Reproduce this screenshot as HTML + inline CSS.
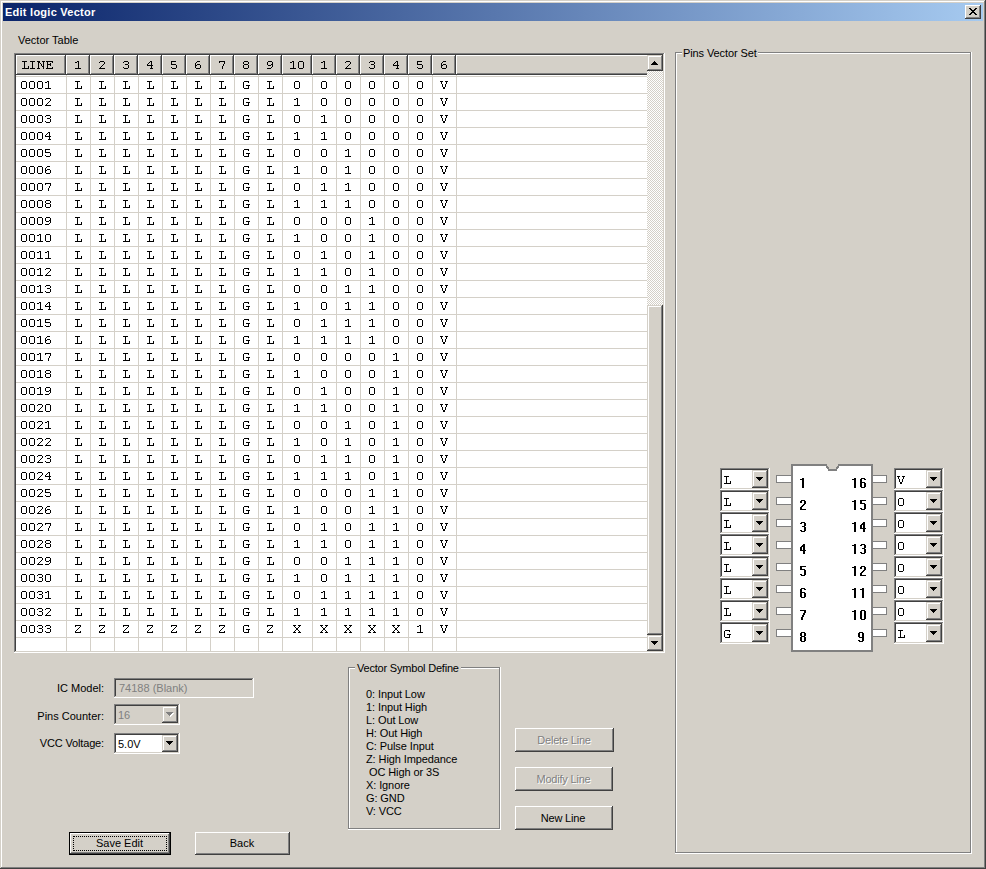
<!DOCTYPE html><html><head><meta charset="utf-8"><style>
*{margin:0;padding:0}
html,body{width:986px;height:869px;overflow:hidden;background:#D4D0C8}
#w{position:relative;width:986px;height:869px;overflow:hidden}
#w div{position:absolute;white-space:pre}
.t{font:11px/11px "Liberation Sans",sans-serif;color:#000}
.tb{font:bold 11px/11px "Liberation Sans",sans-serif;color:#fff;letter-spacing:0.25px}
.m{font:13px/13px "Liberation Mono",monospace;color:#000;letter-spacing:0.2px}
.nb{font:bold 14px/14px "Liberation Sans",sans-serif;color:#000}
</style></head><body><div id="w"><div style="left:0px;top:0px;width:986px;height:869px;background:#D4D0C8;"></div><div style="left:1px;top:1px;width:984px;height:1px;background:#fff;"></div><div style="left:1px;top:1px;width:1px;height:867px;background:#fff;"></div><div style="left:984px;top:1px;width:1px;height:867px;background:#808080;"></div><div style="left:1px;top:867px;width:984px;height:1px;background:#808080;"></div><div style="left:985px;top:0px;width:1px;height:869px;background:#404040;"></div><div style="left:0px;top:868px;width:986px;height:1px;background:#404040;"></div><div style="left:3px;top:3px;width:980px;height:18px;background:linear-gradient(to right,#0A246A,#A6CAF0);"></div><div class="tb" style="left:5px;top:7px;">Edit logic Vector</div><div style="left:965px;top:5px;width:16px;height:14px;background:#D4D0C8;box-shadow:inset -1px -1px 0 #404040,inset 1px 1px 0 #fff,inset -2px -2px 0 #808080,inset 2px 2px 0 #D4D0C8;"></div><div style="left:969px;top:8px;width:1px;height:1px;background:#000;"></div><div style="left:970px;top:8px;width:1px;height:1px;background:#000;"></div><div style="left:975px;top:8px;width:1px;height:1px;background:#000;"></div><div style="left:976px;top:8px;width:1px;height:1px;background:#000;"></div><div style="left:970px;top:9px;width:1px;height:1px;background:#000;"></div><div style="left:971px;top:9px;width:1px;height:1px;background:#000;"></div><div style="left:974px;top:9px;width:1px;height:1px;background:#000;"></div><div style="left:975px;top:9px;width:1px;height:1px;background:#000;"></div><div style="left:971px;top:10px;width:1px;height:1px;background:#000;"></div><div style="left:972px;top:10px;width:1px;height:1px;background:#000;"></div><div style="left:973px;top:10px;width:1px;height:1px;background:#000;"></div><div style="left:974px;top:10px;width:1px;height:1px;background:#000;"></div><div style="left:972px;top:11px;width:1px;height:1px;background:#000;"></div><div style="left:973px;top:11px;width:1px;height:1px;background:#000;"></div><div style="left:971px;top:12px;width:1px;height:1px;background:#000;"></div><div style="left:972px;top:12px;width:1px;height:1px;background:#000;"></div><div style="left:973px;top:12px;width:1px;height:1px;background:#000;"></div><div style="left:974px;top:12px;width:1px;height:1px;background:#000;"></div><div style="left:970px;top:13px;width:1px;height:1px;background:#000;"></div><div style="left:971px;top:13px;width:1px;height:1px;background:#000;"></div><div style="left:974px;top:13px;width:1px;height:1px;background:#000;"></div><div style="left:975px;top:13px;width:1px;height:1px;background:#000;"></div><div style="left:969px;top:14px;width:1px;height:1px;background:#000;"></div><div style="left:970px;top:14px;width:1px;height:1px;background:#000;"></div><div style="left:975px;top:14px;width:1px;height:1px;background:#000;"></div><div style="left:976px;top:14px;width:1px;height:1px;background:#000;"></div><div class="t" style="left:18px;top:35px;">Vector Table</div><div style="left:14px;top:53px;width:651px;height:600px;background:#fff;box-shadow:inset -1px -1px 0 #fff,inset 1px 1px 0 #808080,inset -2px -2px 0 #D4D0C8,inset 2px 2px 0 #404040;"></div><div style="left:16px;top:55px;width:50px;height:20px;background:#D4D0C8;box-shadow:inset -1px -1px 0 #404040,inset 1px 1px 0 #fff,inset -2px -2px 0 #808080"></div><div style="left:66px;top:55px;width:24px;height:20px;background:#D4D0C8;box-shadow:inset -1px -1px 0 #404040,inset 1px 1px 0 #fff,inset -2px -2px 0 #808080"></div><div style="left:90px;top:55px;width:24px;height:20px;background:#D4D0C8;box-shadow:inset -1px -1px 0 #404040,inset 1px 1px 0 #fff,inset -2px -2px 0 #808080"></div><div style="left:114px;top:55px;width:24px;height:20px;background:#D4D0C8;box-shadow:inset -1px -1px 0 #404040,inset 1px 1px 0 #fff,inset -2px -2px 0 #808080"></div><div style="left:138px;top:55px;width:24px;height:20px;background:#D4D0C8;box-shadow:inset -1px -1px 0 #404040,inset 1px 1px 0 #fff,inset -2px -2px 0 #808080"></div><div style="left:162px;top:55px;width:24px;height:20px;background:#D4D0C8;box-shadow:inset -1px -1px 0 #404040,inset 1px 1px 0 #fff,inset -2px -2px 0 #808080"></div><div style="left:186px;top:55px;width:24px;height:20px;background:#D4D0C8;box-shadow:inset -1px -1px 0 #404040,inset 1px 1px 0 #fff,inset -2px -2px 0 #808080"></div><div style="left:210px;top:55px;width:24px;height:20px;background:#D4D0C8;box-shadow:inset -1px -1px 0 #404040,inset 1px 1px 0 #fff,inset -2px -2px 0 #808080"></div><div style="left:234px;top:55px;width:24px;height:20px;background:#D4D0C8;box-shadow:inset -1px -1px 0 #404040,inset 1px 1px 0 #fff,inset -2px -2px 0 #808080"></div><div style="left:258px;top:55px;width:24px;height:20px;background:#D4D0C8;box-shadow:inset -1px -1px 0 #404040,inset 1px 1px 0 #fff,inset -2px -2px 0 #808080"></div><div style="left:282px;top:55px;width:30px;height:20px;background:#D4D0C8;box-shadow:inset -1px -1px 0 #404040,inset 1px 1px 0 #fff,inset -2px -2px 0 #808080"></div><div style="left:312px;top:55px;width:24px;height:20px;background:#D4D0C8;box-shadow:inset -1px -1px 0 #404040,inset 1px 1px 0 #fff,inset -2px -2px 0 #808080"></div><div style="left:336px;top:55px;width:24px;height:20px;background:#D4D0C8;box-shadow:inset -1px -1px 0 #404040,inset 1px 1px 0 #fff,inset -2px -2px 0 #808080"></div><div style="left:360px;top:55px;width:24px;height:20px;background:#D4D0C8;box-shadow:inset -1px -1px 0 #404040,inset 1px 1px 0 #fff,inset -2px -2px 0 #808080"></div><div style="left:384px;top:55px;width:24px;height:20px;background:#D4D0C8;box-shadow:inset -1px -1px 0 #404040,inset 1px 1px 0 #fff,inset -2px -2px 0 #808080"></div><div style="left:408px;top:55px;width:24px;height:20px;background:#D4D0C8;box-shadow:inset -1px -1px 0 #404040,inset 1px 1px 0 #fff,inset -2px -2px 0 #808080"></div><div style="left:432px;top:55px;width:24px;height:20px;background:#D4D0C8;box-shadow:inset -1px -1px 0 #404040,inset 1px 1px 0 #fff,inset -2px -2px 0 #808080"></div><div style="left:456px;top:55px;width:191px;height:20px;background:#D4D0C8;box-shadow:inset 0 -1px 0 #404040,inset 1px 1px 0 #fff,inset 0 -2px 0 #808080"></div><div style="left:16px;top:76px;width:631px;height:1px;background:#D4D0C8;"></div><div style="left:16px;top:93px;width:631px;height:1px;background:#D4D0C8;"></div><div style="left:16px;top:110px;width:631px;height:1px;background:#D4D0C8;"></div><div style="left:16px;top:127px;width:631px;height:1px;background:#D4D0C8;"></div><div style="left:16px;top:144px;width:631px;height:1px;background:#D4D0C8;"></div><div style="left:16px;top:161px;width:631px;height:1px;background:#D4D0C8;"></div><div style="left:16px;top:178px;width:631px;height:1px;background:#D4D0C8;"></div><div style="left:16px;top:195px;width:631px;height:1px;background:#D4D0C8;"></div><div style="left:16px;top:212px;width:631px;height:1px;background:#D4D0C8;"></div><div style="left:16px;top:229px;width:631px;height:1px;background:#D4D0C8;"></div><div style="left:16px;top:246px;width:631px;height:1px;background:#D4D0C8;"></div><div style="left:16px;top:263px;width:631px;height:1px;background:#D4D0C8;"></div><div style="left:16px;top:280px;width:631px;height:1px;background:#D4D0C8;"></div><div style="left:16px;top:297px;width:631px;height:1px;background:#D4D0C8;"></div><div style="left:16px;top:314px;width:631px;height:1px;background:#D4D0C8;"></div><div style="left:16px;top:331px;width:631px;height:1px;background:#D4D0C8;"></div><div style="left:16px;top:348px;width:631px;height:1px;background:#D4D0C8;"></div><div style="left:16px;top:365px;width:631px;height:1px;background:#D4D0C8;"></div><div style="left:16px;top:382px;width:631px;height:1px;background:#D4D0C8;"></div><div style="left:16px;top:399px;width:631px;height:1px;background:#D4D0C8;"></div><div style="left:16px;top:416px;width:631px;height:1px;background:#D4D0C8;"></div><div style="left:16px;top:433px;width:631px;height:1px;background:#D4D0C8;"></div><div style="left:16px;top:450px;width:631px;height:1px;background:#D4D0C8;"></div><div style="left:16px;top:467px;width:631px;height:1px;background:#D4D0C8;"></div><div style="left:16px;top:484px;width:631px;height:1px;background:#D4D0C8;"></div><div style="left:16px;top:501px;width:631px;height:1px;background:#D4D0C8;"></div><div style="left:16px;top:518px;width:631px;height:1px;background:#D4D0C8;"></div><div style="left:16px;top:535px;width:631px;height:1px;background:#D4D0C8;"></div><div style="left:16px;top:552px;width:631px;height:1px;background:#D4D0C8;"></div><div style="left:16px;top:569px;width:631px;height:1px;background:#D4D0C8;"></div><div style="left:16px;top:586px;width:631px;height:1px;background:#D4D0C8;"></div><div style="left:16px;top:603px;width:631px;height:1px;background:#D4D0C8;"></div><div style="left:16px;top:620px;width:631px;height:1px;background:#D4D0C8;"></div><div style="left:16px;top:637px;width:631px;height:1px;background:#D4D0C8;"></div><div style="left:66px;top:75px;width:1px;height:576px;background:#D4D0C8;"></div><div style="left:90px;top:75px;width:1px;height:576px;background:#D4D0C8;"></div><div style="left:114px;top:75px;width:1px;height:576px;background:#D4D0C8;"></div><div style="left:138px;top:75px;width:1px;height:576px;background:#D4D0C8;"></div><div style="left:162px;top:75px;width:1px;height:576px;background:#D4D0C8;"></div><div style="left:186px;top:75px;width:1px;height:576px;background:#D4D0C8;"></div><div style="left:210px;top:75px;width:1px;height:576px;background:#D4D0C8;"></div><div style="left:234px;top:75px;width:1px;height:576px;background:#D4D0C8;"></div><div style="left:258px;top:75px;width:1px;height:576px;background:#D4D0C8;"></div><div style="left:282px;top:75px;width:1px;height:576px;background:#D4D0C8;"></div><div style="left:312px;top:75px;width:1px;height:576px;background:#D4D0C8;"></div><div style="left:336px;top:75px;width:1px;height:576px;background:#D4D0C8;"></div><div style="left:360px;top:75px;width:1px;height:576px;background:#D4D0C8;"></div><div style="left:384px;top:75px;width:1px;height:576px;background:#D4D0C8;"></div><div style="left:408px;top:75px;width:1px;height:576px;background:#D4D0C8;"></div><div style="left:432px;top:75px;width:1px;height:576px;background:#D4D0C8;"></div><div style="left:456px;top:75px;width:1px;height:576px;background:#D4D0C8;"></div><div style="left:647px;top:71px;width:16px;height:234px;background:repeating-conic-gradient(#fff 0 25%,#D4D0C8 0 50%);background-size:2px 2px"></div><div style="left:647px;top:55px;width:16px;height:16px;background:#D4D0C8;box-shadow:inset -1px -1px 0 #404040,inset 1px 1px 0 #D4D0C8,inset -2px -2px 0 #808080,inset 2px 2px 0 #fff;"></div><div style="left:654px;top:61px;width:1px;height:1px;background:#000;"></div><div style="left:653px;top:62px;width:3px;height:1px;background:#000;"></div><div style="left:652px;top:63px;width:5px;height:1px;background:#000;"></div><div style="left:651px;top:64px;width:7px;height:1px;background:#000;"></div><div style="left:647px;top:305px;width:16px;height:330px;background:#D4D0C8;box-shadow:inset -1px -1px 0 #404040,inset 1px 1px 0 #D4D0C8,inset -2px -2px 0 #808080,inset 2px 2px 0 #fff;"></div><div style="left:647px;top:635px;width:16px;height:16px;background:#D4D0C8;box-shadow:inset -1px -1px 0 #404040,inset 1px 1px 0 #D4D0C8,inset -2px -2px 0 #808080,inset 2px 2px 0 #fff;"></div><div style="left:651px;top:641px;width:7px;height:1px;background:#000;"></div><div style="left:652px;top:642px;width:5px;height:1px;background:#000;"></div><div style="left:653px;top:643px;width:3px;height:1px;background:#000;"></div><div style="left:654px;top:644px;width:1px;height:1px;background:#000;"></div><div class="t" style="left:4px;top:683px;width:100px;text-align:right;">IC Model:</div><div style="left:114px;top:678px;width:140px;height:20px;background:#D4D0C8;box-shadow:inset -1px -1px 0 #fff,inset 1px 1px 0 #808080,inset -2px -2px 0 #D4D0C8,inset 2px 2px 0 #404040;"></div><div class="t" style="left:119px;top:683px;color:#808080">74188 (Blank)</div><div class="t" style="left:4px;top:711px;width:100px;text-align:right;">Pins Counter:</div><div style="left:114px;top:704px;width:66px;height:21px;background:#D4D0C8;box-shadow:inset -1px -1px 0 #fff,inset 1px 1px 0 #808080,inset -2px -2px 0 #D4D0C8,inset 2px 2px 0 #404040;"></div><div class="t" style="left:118px;top:710px;color:#808080">16</div><div style="left:162px;top:706px;width:16px;height:17px;background:#D4D0C8;box-shadow:inset -1px -1px 0 #404040,inset 1px 1px 0 #D4D0C8,inset -2px -2px 0 #808080,inset 2px 2px 0 #fff;"></div><div style="left:167px;top:713px;width:7px;height:1px;background:#fff;"></div><div style="left:168px;top:714px;width:5px;height:1px;background:#fff;"></div><div style="left:169px;top:715px;width:3px;height:1px;background:#fff;"></div><div style="left:170px;top:716px;width:1px;height:1px;background:#fff;"></div><div style="left:166px;top:712px;width:7px;height:1px;background:#808080;"></div><div style="left:167px;top:713px;width:5px;height:1px;background:#808080;"></div><div style="left:168px;top:714px;width:3px;height:1px;background:#808080;"></div><div style="left:169px;top:715px;width:1px;height:1px;background:#808080;"></div><div class="t" style="left:4px;top:738px;width:100px;text-align:right;letter-spacing:-0.15px">VCC Voltage:</div><div style="left:114px;top:733px;width:66px;height:21px;background:#fff;box-shadow:inset -1px -1px 0 #fff,inset 1px 1px 0 #808080,inset -2px -2px 0 #D4D0C8,inset 2px 2px 0 #404040;"></div><div class="t" style="left:118px;top:739px;">5.0V</div><div style="left:162px;top:735px;width:16px;height:17px;background:#D4D0C8;box-shadow:inset -1px -1px 0 #404040,inset 1px 1px 0 #D4D0C8,inset -2px -2px 0 #808080,inset 2px 2px 0 #fff;"></div><div style="left:166px;top:741px;width:7px;height:1px;background:#000;"></div><div style="left:167px;top:742px;width:5px;height:1px;background:#000;"></div><div style="left:168px;top:743px;width:3px;height:1px;background:#000;"></div><div style="left:169px;top:744px;width:1px;height:1px;background:#000;"></div><div style="left:69px;top:832px;width:102px;height:23px;background:#000;"></div><div style="left:70px;top:833px;width:100px;height:21px;background:#D4D0C8;box-shadow:inset -1px -1px 0 #404040,inset 1px 1px 0 #fff,inset -2px -2px 0 #808080,inset 2px 2px 0 #D4D0C8;"></div><div style="left:73px;top:836px;width:94px;height:15px;box-sizing:border-box;border:1px dotted #000"></div><div class="t" style="left:69.5px;top:838px;width:100px;text-align:center;">Save Edit</div><div style="left:195px;top:832px;width:95px;height:23px;background:#D4D0C8;box-shadow:inset -1px -1px 0 #404040,inset 1px 1px 0 #fff,inset -2px -2px 0 #808080,inset 2px 2px 0 #D4D0C8;"></div><div class="t" style="left:192.0px;top:838px;width:100px;text-align:center;">Back</div><div style="left:348px;top:667px;width:152px;height:1px;background:#808080;"></div><div style="left:349px;top:668px;width:151px;height:1px;background:#fff;"></div><div style="left:348px;top:667px;width:1px;height:162px;background:#808080;"></div><div style="left:349px;top:668px;width:1px;height:161px;background:#fff;"></div><div style="left:499px;top:667px;width:1px;height:162px;background:#808080;"></div><div style="left:500px;top:667px;width:1px;height:163px;background:#fff;"></div><div style="left:348px;top:828px;width:152px;height:1px;background:#808080;"></div><div style="left:348px;top:829px;width:153px;height:1px;background:#fff;"></div><div style="left:355px;top:666px;width:106px;height:4px;background:#D4D0C8;"></div><div class="t" style="left:357px;top:663px;letter-spacing:-0.2px">Vector Symbol Define</div><div class="t" style="left:366px;top:689px;letter-spacing:-0.1px">0: Input Low</div><div class="t" style="left:366px;top:702px;letter-spacing:-0.1px">1: Input High</div><div class="t" style="left:366px;top:715px;letter-spacing:-0.1px">L: Out Low</div><div class="t" style="left:366px;top:728px;letter-spacing:-0.1px">H: Out High</div><div class="t" style="left:366px;top:741px;letter-spacing:-0.1px">C: Pulse Input</div><div class="t" style="left:366px;top:754px;letter-spacing:-0.1px">Z: High Impedance</div><div class="t" style="left:366px;top:767px;letter-spacing:-0.1px">&nbsp;OC High or 3S</div><div class="t" style="left:366px;top:780px;letter-spacing:-0.1px">X: Ignore</div><div class="t" style="left:366px;top:793px;letter-spacing:-0.1px">G: GND</div><div class="t" style="left:366px;top:806px;letter-spacing:-0.1px">V: VCC</div><div style="left:515px;top:728px;width:99px;height:24px;background:#D4D0C8;box-shadow:inset -1px -1px 0 #404040,inset 1px 1px 0 #fff,inset -2px -2px 0 #808080,inset 2px 2px 0 #D4D0C8;"></div><div class="t" style="left:505.0px;top:736px;width:120px;text-align:center;color:#fff;letter-spacing:-0.2px">Delete Line</div><div class="t" style="left:504.0px;top:735px;width:120px;text-align:center;color:#808080;letter-spacing:-0.2px">Delete Line</div><div style="left:515px;top:767px;width:98px;height:24px;background:#D4D0C8;box-shadow:inset -1px -1px 0 #404040,inset 1px 1px 0 #fff,inset -2px -2px 0 #808080,inset 2px 2px 0 #D4D0C8;"></div><div class="t" style="left:504.5px;top:775px;width:120px;text-align:center;color:#fff;letter-spacing:-0.2px">Modify Line</div><div class="t" style="left:503.5px;top:774px;width:120px;text-align:center;color:#808080;letter-spacing:-0.2px">Modify Line</div><div style="left:515px;top:806px;width:98px;height:24px;background:#D4D0C8;box-shadow:inset -1px -1px 0 #404040,inset 1px 1px 0 #fff,inset -2px -2px 0 #808080,inset 2px 2px 0 #D4D0C8;"></div><div class="t" style="left:503.0px;top:813px;width:120px;text-align:center;letter-spacing:-0.2px">New Line</div><div style="left:675px;top:52px;width:296px;height:1px;background:#808080;"></div><div style="left:676px;top:53px;width:295px;height:1px;background:#fff;"></div><div style="left:675px;top:52px;width:1px;height:801px;background:#808080;"></div><div style="left:676px;top:53px;width:1px;height:800px;background:#fff;"></div><div style="left:970px;top:52px;width:1px;height:801px;background:#808080;"></div><div style="left:971px;top:52px;width:1px;height:802px;background:#fff;"></div><div style="left:675px;top:852px;width:296px;height:1px;background:#808080;"></div><div style="left:675px;top:853px;width:297px;height:1px;background:#fff;"></div><div style="left:682px;top:51px;width:76px;height:4px;background:#D4D0C8;"></div><div class="t" style="left:683px;top:48px;letter-spacing:-0.1px">Pins Vector Set</div><div style="left:720px;top:468px;width:50px;height:22px;background:#fff;box-shadow:inset -1px -1px 0 #fff,inset 1px 1px 0 #808080,inset -2px -2px 0 #D4D0C8,inset 2px 2px 0 #404040;"></div><div style="left:752px;top:470px;width:16px;height:18px;background:#D4D0C8;box-shadow:inset -1px -1px 0 #404040,inset 1px 1px 0 #D4D0C8,inset -2px -2px 0 #808080,inset 2px 2px 0 #fff;"></div><div style="left:756px;top:477px;width:7px;height:1px;background:#000;"></div><div style="left:757px;top:478px;width:5px;height:1px;background:#000;"></div><div style="left:758px;top:479px;width:3px;height:1px;background:#000;"></div><div style="left:759px;top:480px;width:1px;height:1px;background:#000;"></div><div style="left:894px;top:468px;width:50px;height:22px;background:#fff;box-shadow:inset -1px -1px 0 #fff,inset 1px 1px 0 #808080,inset -2px -2px 0 #D4D0C8,inset 2px 2px 0 #404040;"></div><div style="left:926px;top:470px;width:16px;height:18px;background:#D4D0C8;box-shadow:inset -1px -1px 0 #404040,inset 1px 1px 0 #D4D0C8,inset -2px -2px 0 #808080,inset 2px 2px 0 #fff;"></div><div style="left:930px;top:477px;width:7px;height:1px;background:#000;"></div><div style="left:931px;top:478px;width:5px;height:1px;background:#000;"></div><div style="left:932px;top:479px;width:3px;height:1px;background:#000;"></div><div style="left:933px;top:480px;width:1px;height:1px;background:#000;"></div><div style="left:720px;top:490px;width:50px;height:22px;background:#fff;box-shadow:inset -1px -1px 0 #fff,inset 1px 1px 0 #808080,inset -2px -2px 0 #D4D0C8,inset 2px 2px 0 #404040;"></div><div style="left:752px;top:492px;width:16px;height:18px;background:#D4D0C8;box-shadow:inset -1px -1px 0 #404040,inset 1px 1px 0 #D4D0C8,inset -2px -2px 0 #808080,inset 2px 2px 0 #fff;"></div><div style="left:756px;top:499px;width:7px;height:1px;background:#000;"></div><div style="left:757px;top:500px;width:5px;height:1px;background:#000;"></div><div style="left:758px;top:501px;width:3px;height:1px;background:#000;"></div><div style="left:759px;top:502px;width:1px;height:1px;background:#000;"></div><div style="left:894px;top:490px;width:50px;height:22px;background:#fff;box-shadow:inset -1px -1px 0 #fff,inset 1px 1px 0 #808080,inset -2px -2px 0 #D4D0C8,inset 2px 2px 0 #404040;"></div><div style="left:926px;top:492px;width:16px;height:18px;background:#D4D0C8;box-shadow:inset -1px -1px 0 #404040,inset 1px 1px 0 #D4D0C8,inset -2px -2px 0 #808080,inset 2px 2px 0 #fff;"></div><div style="left:930px;top:499px;width:7px;height:1px;background:#000;"></div><div style="left:931px;top:500px;width:5px;height:1px;background:#000;"></div><div style="left:932px;top:501px;width:3px;height:1px;background:#000;"></div><div style="left:933px;top:502px;width:1px;height:1px;background:#000;"></div><div style="left:720px;top:512px;width:50px;height:22px;background:#fff;box-shadow:inset -1px -1px 0 #fff,inset 1px 1px 0 #808080,inset -2px -2px 0 #D4D0C8,inset 2px 2px 0 #404040;"></div><div style="left:752px;top:514px;width:16px;height:18px;background:#D4D0C8;box-shadow:inset -1px -1px 0 #404040,inset 1px 1px 0 #D4D0C8,inset -2px -2px 0 #808080,inset 2px 2px 0 #fff;"></div><div style="left:756px;top:521px;width:7px;height:1px;background:#000;"></div><div style="left:757px;top:522px;width:5px;height:1px;background:#000;"></div><div style="left:758px;top:523px;width:3px;height:1px;background:#000;"></div><div style="left:759px;top:524px;width:1px;height:1px;background:#000;"></div><div style="left:894px;top:512px;width:50px;height:22px;background:#fff;box-shadow:inset -1px -1px 0 #fff,inset 1px 1px 0 #808080,inset -2px -2px 0 #D4D0C8,inset 2px 2px 0 #404040;"></div><div style="left:926px;top:514px;width:16px;height:18px;background:#D4D0C8;box-shadow:inset -1px -1px 0 #404040,inset 1px 1px 0 #D4D0C8,inset -2px -2px 0 #808080,inset 2px 2px 0 #fff;"></div><div style="left:930px;top:521px;width:7px;height:1px;background:#000;"></div><div style="left:931px;top:522px;width:5px;height:1px;background:#000;"></div><div style="left:932px;top:523px;width:3px;height:1px;background:#000;"></div><div style="left:933px;top:524px;width:1px;height:1px;background:#000;"></div><div style="left:720px;top:534px;width:50px;height:22px;background:#fff;box-shadow:inset -1px -1px 0 #fff,inset 1px 1px 0 #808080,inset -2px -2px 0 #D4D0C8,inset 2px 2px 0 #404040;"></div><div style="left:752px;top:536px;width:16px;height:18px;background:#D4D0C8;box-shadow:inset -1px -1px 0 #404040,inset 1px 1px 0 #D4D0C8,inset -2px -2px 0 #808080,inset 2px 2px 0 #fff;"></div><div style="left:756px;top:543px;width:7px;height:1px;background:#000;"></div><div style="left:757px;top:544px;width:5px;height:1px;background:#000;"></div><div style="left:758px;top:545px;width:3px;height:1px;background:#000;"></div><div style="left:759px;top:546px;width:1px;height:1px;background:#000;"></div><div style="left:894px;top:534px;width:50px;height:22px;background:#fff;box-shadow:inset -1px -1px 0 #fff,inset 1px 1px 0 #808080,inset -2px -2px 0 #D4D0C8,inset 2px 2px 0 #404040;"></div><div style="left:926px;top:536px;width:16px;height:18px;background:#D4D0C8;box-shadow:inset -1px -1px 0 #404040,inset 1px 1px 0 #D4D0C8,inset -2px -2px 0 #808080,inset 2px 2px 0 #fff;"></div><div style="left:930px;top:543px;width:7px;height:1px;background:#000;"></div><div style="left:931px;top:544px;width:5px;height:1px;background:#000;"></div><div style="left:932px;top:545px;width:3px;height:1px;background:#000;"></div><div style="left:933px;top:546px;width:1px;height:1px;background:#000;"></div><div style="left:720px;top:556px;width:50px;height:22px;background:#fff;box-shadow:inset -1px -1px 0 #fff,inset 1px 1px 0 #808080,inset -2px -2px 0 #D4D0C8,inset 2px 2px 0 #404040;"></div><div style="left:752px;top:558px;width:16px;height:18px;background:#D4D0C8;box-shadow:inset -1px -1px 0 #404040,inset 1px 1px 0 #D4D0C8,inset -2px -2px 0 #808080,inset 2px 2px 0 #fff;"></div><div style="left:756px;top:565px;width:7px;height:1px;background:#000;"></div><div style="left:757px;top:566px;width:5px;height:1px;background:#000;"></div><div style="left:758px;top:567px;width:3px;height:1px;background:#000;"></div><div style="left:759px;top:568px;width:1px;height:1px;background:#000;"></div><div style="left:894px;top:556px;width:50px;height:22px;background:#fff;box-shadow:inset -1px -1px 0 #fff,inset 1px 1px 0 #808080,inset -2px -2px 0 #D4D0C8,inset 2px 2px 0 #404040;"></div><div style="left:926px;top:558px;width:16px;height:18px;background:#D4D0C8;box-shadow:inset -1px -1px 0 #404040,inset 1px 1px 0 #D4D0C8,inset -2px -2px 0 #808080,inset 2px 2px 0 #fff;"></div><div style="left:930px;top:565px;width:7px;height:1px;background:#000;"></div><div style="left:931px;top:566px;width:5px;height:1px;background:#000;"></div><div style="left:932px;top:567px;width:3px;height:1px;background:#000;"></div><div style="left:933px;top:568px;width:1px;height:1px;background:#000;"></div><div style="left:720px;top:578px;width:50px;height:22px;background:#fff;box-shadow:inset -1px -1px 0 #fff,inset 1px 1px 0 #808080,inset -2px -2px 0 #D4D0C8,inset 2px 2px 0 #404040;"></div><div style="left:752px;top:580px;width:16px;height:18px;background:#D4D0C8;box-shadow:inset -1px -1px 0 #404040,inset 1px 1px 0 #D4D0C8,inset -2px -2px 0 #808080,inset 2px 2px 0 #fff;"></div><div style="left:756px;top:587px;width:7px;height:1px;background:#000;"></div><div style="left:757px;top:588px;width:5px;height:1px;background:#000;"></div><div style="left:758px;top:589px;width:3px;height:1px;background:#000;"></div><div style="left:759px;top:590px;width:1px;height:1px;background:#000;"></div><div style="left:894px;top:578px;width:50px;height:22px;background:#fff;box-shadow:inset -1px -1px 0 #fff,inset 1px 1px 0 #808080,inset -2px -2px 0 #D4D0C8,inset 2px 2px 0 #404040;"></div><div style="left:926px;top:580px;width:16px;height:18px;background:#D4D0C8;box-shadow:inset -1px -1px 0 #404040,inset 1px 1px 0 #D4D0C8,inset -2px -2px 0 #808080,inset 2px 2px 0 #fff;"></div><div style="left:930px;top:587px;width:7px;height:1px;background:#000;"></div><div style="left:931px;top:588px;width:5px;height:1px;background:#000;"></div><div style="left:932px;top:589px;width:3px;height:1px;background:#000;"></div><div style="left:933px;top:590px;width:1px;height:1px;background:#000;"></div><div style="left:720px;top:600px;width:50px;height:22px;background:#fff;box-shadow:inset -1px -1px 0 #fff,inset 1px 1px 0 #808080,inset -2px -2px 0 #D4D0C8,inset 2px 2px 0 #404040;"></div><div style="left:752px;top:602px;width:16px;height:18px;background:#D4D0C8;box-shadow:inset -1px -1px 0 #404040,inset 1px 1px 0 #D4D0C8,inset -2px -2px 0 #808080,inset 2px 2px 0 #fff;"></div><div style="left:756px;top:609px;width:7px;height:1px;background:#000;"></div><div style="left:757px;top:610px;width:5px;height:1px;background:#000;"></div><div style="left:758px;top:611px;width:3px;height:1px;background:#000;"></div><div style="left:759px;top:612px;width:1px;height:1px;background:#000;"></div><div style="left:894px;top:600px;width:50px;height:22px;background:#fff;box-shadow:inset -1px -1px 0 #fff,inset 1px 1px 0 #808080,inset -2px -2px 0 #D4D0C8,inset 2px 2px 0 #404040;"></div><div style="left:926px;top:602px;width:16px;height:18px;background:#D4D0C8;box-shadow:inset -1px -1px 0 #404040,inset 1px 1px 0 #D4D0C8,inset -2px -2px 0 #808080,inset 2px 2px 0 #fff;"></div><div style="left:930px;top:609px;width:7px;height:1px;background:#000;"></div><div style="left:931px;top:610px;width:5px;height:1px;background:#000;"></div><div style="left:932px;top:611px;width:3px;height:1px;background:#000;"></div><div style="left:933px;top:612px;width:1px;height:1px;background:#000;"></div><div style="left:720px;top:622px;width:50px;height:22px;background:#fff;box-shadow:inset -1px -1px 0 #fff,inset 1px 1px 0 #808080,inset -2px -2px 0 #D4D0C8,inset 2px 2px 0 #404040;"></div><div style="left:752px;top:624px;width:16px;height:18px;background:#D4D0C8;box-shadow:inset -1px -1px 0 #404040,inset 1px 1px 0 #D4D0C8,inset -2px -2px 0 #808080,inset 2px 2px 0 #fff;"></div><div style="left:756px;top:631px;width:7px;height:1px;background:#000;"></div><div style="left:757px;top:632px;width:5px;height:1px;background:#000;"></div><div style="left:758px;top:633px;width:3px;height:1px;background:#000;"></div><div style="left:759px;top:634px;width:1px;height:1px;background:#000;"></div><div style="left:894px;top:622px;width:50px;height:22px;background:#fff;box-shadow:inset -1px -1px 0 #fff,inset 1px 1px 0 #808080,inset -2px -2px 0 #D4D0C8,inset 2px 2px 0 #404040;"></div><div style="left:926px;top:624px;width:16px;height:18px;background:#D4D0C8;box-shadow:inset -1px -1px 0 #404040,inset 1px 1px 0 #D4D0C8,inset -2px -2px 0 #808080,inset 2px 2px 0 #fff;"></div><div style="left:930px;top:631px;width:7px;height:1px;background:#000;"></div><div style="left:931px;top:632px;width:5px;height:1px;background:#000;"></div><div style="left:932px;top:633px;width:3px;height:1px;background:#000;"></div><div style="left:933px;top:634px;width:1px;height:1px;background:#000;"></div><svg style="position:absolute;left:0;top:0" width="986" height="869" shape-rendering="crispEdges"><rect x="776.5" y="475.5" width="15" height="7" fill="#fff" stroke="#808080" stroke-width="1"/><rect x="871.5" y="475.5" width="15" height="7" fill="#fff" stroke="#808080" stroke-width="1"/><rect x="776.5" y="497.5" width="15" height="7" fill="#fff" stroke="#808080" stroke-width="1"/><rect x="871.5" y="497.5" width="15" height="7" fill="#fff" stroke="#808080" stroke-width="1"/><rect x="776.5" y="519.5" width="15" height="7" fill="#fff" stroke="#808080" stroke-width="1"/><rect x="871.5" y="519.5" width="15" height="7" fill="#fff" stroke="#808080" stroke-width="1"/><rect x="776.5" y="541.5" width="15" height="7" fill="#fff" stroke="#808080" stroke-width="1"/><rect x="871.5" y="541.5" width="15" height="7" fill="#fff" stroke="#808080" stroke-width="1"/><rect x="776.5" y="563.5" width="15" height="7" fill="#fff" stroke="#808080" stroke-width="1"/><rect x="871.5" y="563.5" width="15" height="7" fill="#fff" stroke="#808080" stroke-width="1"/><rect x="776.5" y="585.5" width="15" height="7" fill="#fff" stroke="#808080" stroke-width="1"/><rect x="871.5" y="585.5" width="15" height="7" fill="#fff" stroke="#808080" stroke-width="1"/><rect x="776.5" y="607.5" width="15" height="7" fill="#fff" stroke="#808080" stroke-width="1"/><rect x="871.5" y="607.5" width="15" height="7" fill="#fff" stroke="#808080" stroke-width="1"/><rect x="776.5" y="629.5" width="15" height="7" fill="#fff" stroke="#808080" stroke-width="1"/><rect x="871.5" y="629.5" width="15" height="7" fill="#fff" stroke="#808080" stroke-width="1"/><path d="M792 465 H826 L829 470 H836 L839 465 H872 V651 H792 Z" fill="#fff" stroke="#808080" stroke-width="2"/></svg><svg style="position:absolute;left:0;top:0" width="986" height="869" shape-rendering="crispEdges"><defs><path id="gL" d="M1 0h5v1h-5zM3 1h1v1h-1zM3 2h1v1h-1zM3 3h1v1h-1zM3 4h1v1h-1zM3 5h1v1h-1zM7 5h1v1h-1zM3 6h1v1h-1zM7 6h1v1h-1zM1 7h7v1h-7z"/><path id="gI" d="M1 0h5v1h-5zM3 1h1v1h-1zM3 2h1v1h-1zM3 3h1v1h-1zM3 4h1v1h-1zM3 5h1v1h-1zM3 6h1v1h-1zM1 7h5v1h-5z"/><path id="gN" d="M0 0h3v1h-3zM5 0h3v1h-3zM1 1h2v1h-2zM6 1h1v1h-1zM1 2h1v1h-1zM3 2h1v1h-1zM6 2h1v1h-1zM1 3h1v1h-1zM4 3h1v1h-1zM6 3h1v1h-1zM1 4h1v1h-1zM4 4h1v1h-1zM6 4h1v1h-1zM1 5h1v1h-1zM5 5h2v1h-2zM1 6h1v1h-1zM6 6h1v1h-1zM0 7h3v1h-3zM6 7h1v1h-1z"/><path id="gE" d="M1 0h7v1h-7zM2 1h1v1h-1zM7 1h1v1h-1zM2 2h1v1h-1zM5 2h1v1h-1zM2 3h4v1h-4zM2 4h1v1h-1zM5 4h1v1h-1zM2 5h1v1h-1zM2 6h1v1h-1zM7 6h1v1h-1zM1 7h7v1h-7z"/><path id="gG" d="M2 0h5v1h-5zM1 1h1v1h-1zM6 1h1v1h-1zM1 2h1v1h-1zM1 3h1v1h-1zM1 4h1v1h-1zM4 4h4v1h-4zM1 5h1v1h-1zM6 5h1v1h-1zM1 6h1v1h-1zM6 6h1v1h-1zM2 7h5v1h-5z"/><path id="gV" d="M0 0h3v1h-3zM5 0h3v1h-3zM1 1h1v1h-1zM6 1h1v1h-1zM1 2h1v1h-1zM6 2h1v1h-1zM2 3h1v1h-1zM5 3h1v1h-1zM2 4h1v1h-1zM5 4h1v1h-1zM2 5h1v1h-1zM5 5h1v1h-1zM3 6h2v1h-2zM3 7h2v1h-2z"/><path id="gZ" d="M1 0h6v1h-6zM1 1h1v1h-1zM6 1h1v1h-1zM5 2h1v1h-1zM4 3h1v1h-1zM3 4h1v1h-1zM2 5h1v1h-1zM1 6h1v1h-1zM6 6h1v1h-1zM1 7h6v1h-6z"/><path id="gX" d="M0 0h3v1h-3zM5 0h3v1h-3zM1 1h1v1h-1zM6 1h1v1h-1zM2 2h1v1h-1zM5 2h1v1h-1zM3 3h2v1h-2zM3 4h2v1h-2zM2 5h1v1h-1zM5 5h1v1h-1zM1 6h1v1h-1zM6 6h1v1h-1zM0 7h3v1h-3zM5 7h3v1h-3z"/><path id="g0" d="M2 0h4v1h-4zM1 1h1v1h-1zM6 1h1v1h-1zM1 2h1v1h-1zM6 2h1v1h-1zM1 3h1v1h-1zM6 3h1v1h-1zM1 4h1v1h-1zM6 4h1v1h-1zM1 5h1v1h-1zM6 5h1v1h-1zM1 6h1v1h-1zM6 6h1v1h-1zM2 7h4v1h-4z"/><path id="g1" d="M3 0h2v1h-2zM1 1h2v1h-2zM4 1h1v1h-1zM4 2h1v1h-1zM4 3h1v1h-1zM4 4h1v1h-1zM4 5h1v1h-1zM4 6h1v1h-1zM1 7h6v1h-6z"/><path id="g2" d="M2 0h4v1h-4zM1 1h1v1h-1zM6 1h1v1h-1zM6 2h1v1h-1zM5 3h1v1h-1zM4 4h1v1h-1zM3 5h1v1h-1zM2 6h1v1h-1zM1 7h6v1h-6z"/><path id="g3" d="M2 0h4v1h-4zM1 1h1v1h-1zM6 1h1v1h-1zM6 2h1v1h-1zM3 3h3v1h-3zM6 4h1v1h-1zM6 5h1v1h-1zM1 6h1v1h-1zM6 6h1v1h-1zM2 7h4v1h-4z"/><path id="g4" d="M4 0h2v1h-2zM3 1h1v1h-1zM5 1h1v1h-1zM2 2h1v1h-1zM5 2h1v1h-1zM1 3h1v1h-1zM5 3h1v1h-1zM1 4h6v1h-6zM5 5h1v1h-1zM5 6h1v1h-1zM4 7h3v1h-3z"/><path id="g5" d="M1 0h5v1h-5zM1 1h1v1h-1zM1 2h1v1h-1zM1 3h5v1h-5zM6 4h1v1h-1zM6 5h1v1h-1zM1 6h1v1h-1zM6 6h1v1h-1zM2 7h4v1h-4z"/><path id="g6" d="M3 0h3v1h-3zM2 1h1v1h-1zM1 2h1v1h-1zM1 3h1v1h-1zM3 3h3v1h-3zM1 4h2v1h-2zM6 4h1v1h-1zM1 5h1v1h-1zM6 5h1v1h-1zM1 6h1v1h-1zM6 6h1v1h-1zM2 7h4v1h-4z"/><path id="g7" d="M1 0h6v1h-6zM1 1h1v1h-1zM6 1h1v1h-1zM6 2h1v1h-1zM5 3h1v1h-1zM5 4h1v1h-1zM4 5h1v1h-1zM4 6h1v1h-1zM4 7h1v1h-1z"/><path id="g8" d="M2 0h4v1h-4zM1 1h1v1h-1zM6 1h1v1h-1zM1 2h1v1h-1zM6 2h1v1h-1zM2 3h4v1h-4zM1 4h1v1h-1zM6 4h1v1h-1zM1 5h1v1h-1zM6 5h1v1h-1zM1 6h1v1h-1zM6 6h1v1h-1zM2 7h4v1h-4z"/><path id="g9" d="M2 0h4v1h-4zM1 1h1v1h-1zM6 1h1v1h-1zM1 2h1v1h-1zM6 2h1v1h-1zM1 3h1v1h-1zM5 3h2v1h-2zM2 4h3v1h-3zM6 4h1v1h-1zM6 5h1v1h-1zM5 6h1v1h-1zM1 7h4v1h-4z"/><path id="b1" d="M2 0h2v1h-2zM0 1h4v1h-4zM2 2h2v1h-2zM2 3h2v1h-2zM2 4h2v1h-2zM2 5h2v1h-2zM2 6h2v1h-2zM2 7h2v1h-2zM2 8h2v1h-2zM2 9h2v1h-2z"/><path id="b2" d="M1 0h4v1h-4zM0 1h2v1h-2zM4 1h2v1h-2zM0 2h2v1h-2zM4 2h2v1h-2zM4 3h2v1h-2zM3 4h2v1h-2zM2 5h2v1h-2zM1 6h2v1h-2zM0 7h2v1h-2zM0 8h2v1h-2zM0 9h6v1h-6z"/><path id="b3" d="M1 0h4v1h-4zM0 1h2v1h-2zM4 1h2v1h-2zM4 2h2v1h-2zM4 3h2v1h-2zM2 4h3v1h-3zM4 5h2v1h-2zM4 6h2v1h-2zM4 7h2v1h-2zM0 8h2v1h-2zM4 8h2v1h-2zM1 9h4v1h-4z"/><path id="b4" d="M3 0h2v1h-2zM2 1h3v1h-3zM1 2h4v1h-4zM0 3h2v1h-2zM3 3h2v1h-2zM0 4h2v1h-2zM3 4h2v1h-2zM0 5h2v1h-2zM3 5h2v1h-2zM0 6h6v1h-6zM3 7h2v1h-2zM3 8h2v1h-2zM3 9h2v1h-2z"/><path id="b5" d="M0 0h6v1h-6zM0 1h2v1h-2zM0 2h2v1h-2zM0 3h5v1h-5zM4 4h2v1h-2zM4 5h2v1h-2zM4 6h2v1h-2zM4 7h2v1h-2zM0 8h2v1h-2zM4 8h2v1h-2zM1 9h4v1h-4z"/><path id="b6" d="M1 0h4v1h-4zM0 1h2v1h-2zM4 1h2v1h-2zM0 2h2v1h-2zM0 3h2v1h-2zM0 4h5v1h-5zM0 5h2v1h-2zM4 5h2v1h-2zM0 6h2v1h-2zM4 6h2v1h-2zM0 7h2v1h-2zM4 7h2v1h-2zM0 8h2v1h-2zM4 8h2v1h-2zM1 9h4v1h-4z"/><path id="b7" d="M0 0h6v1h-6zM4 1h2v1h-2zM4 2h2v1h-2zM3 3h2v1h-2zM3 4h2v1h-2zM2 5h2v1h-2zM2 6h2v1h-2zM1 7h2v1h-2zM1 8h2v1h-2zM1 9h2v1h-2z"/><path id="b8" d="M1 0h4v1h-4zM0 1h2v1h-2zM4 1h2v1h-2zM0 2h2v1h-2zM4 2h2v1h-2zM0 3h2v1h-2zM4 3h2v1h-2zM1 4h4v1h-4zM0 5h2v1h-2zM4 5h2v1h-2zM0 6h2v1h-2zM4 6h2v1h-2zM0 7h2v1h-2zM4 7h2v1h-2zM0 8h2v1h-2zM4 8h2v1h-2zM1 9h4v1h-4z"/><path id="b9" d="M1 0h4v1h-4zM0 1h2v1h-2zM4 1h2v1h-2zM0 2h2v1h-2zM4 2h2v1h-2zM0 3h2v1h-2zM4 3h2v1h-2zM0 4h2v1h-2zM4 4h2v1h-2zM1 5h5v1h-5zM4 6h2v1h-2zM4 7h2v1h-2zM0 8h2v1h-2zM4 8h2v1h-2zM1 9h4v1h-4z"/><path id="b0" d="M1 0h4v1h-4zM0 1h2v1h-2zM4 1h2v1h-2zM0 2h2v1h-2zM4 2h2v1h-2zM0 3h2v1h-2zM4 3h2v1h-2zM0 4h2v1h-2zM4 4h2v1h-2zM0 5h2v1h-2zM4 5h2v1h-2zM0 6h2v1h-2zM4 6h2v1h-2zM0 7h2v1h-2zM4 7h2v1h-2zM0 8h2v1h-2zM4 8h2v1h-2zM1 9h4v1h-4z"/></defs><g fill="#000"><use href="#gL" x="21" y="61"/><use href="#gI" x="29" y="61"/><use href="#gN" x="37" y="61"/><use href="#gE" x="45" y="61"/><use href="#g1" x="74" y="61"/><use href="#g2" x="98" y="61"/><use href="#g3" x="122" y="61"/><use href="#g4" x="146" y="61"/><use href="#g5" x="170" y="61"/><use href="#g6" x="194" y="61"/><use href="#g7" x="218" y="61"/><use href="#g8" x="242" y="61"/><use href="#g9" x="266" y="61"/><use href="#g1" x="289" y="61"/><use href="#g0" x="297" y="61"/><use href="#g1" x="320" y="61"/><use href="#g2" x="344" y="61"/><use href="#g3" x="368" y="61"/><use href="#g4" x="392" y="61"/><use href="#g5" x="416" y="61"/><use href="#g6" x="440" y="61"/><use href="#g0" x="20" y="81"/><use href="#g0" x="28" y="81"/><use href="#g0" x="36" y="81"/><use href="#g1" x="44" y="81"/><use href="#gL" x="74" y="81"/><use href="#gL" x="98" y="81"/><use href="#gL" x="122" y="81"/><use href="#gL" x="146" y="81"/><use href="#gL" x="170" y="81"/><use href="#gL" x="194" y="81"/><use href="#gL" x="218" y="81"/><use href="#gG" x="242" y="81"/><use href="#gL" x="266" y="81"/><use href="#g0" x="293" y="81"/><use href="#g0" x="320" y="81"/><use href="#g0" x="344" y="81"/><use href="#g0" x="368" y="81"/><use href="#g0" x="392" y="81"/><use href="#g0" x="416" y="81"/><use href="#gV" x="440" y="81"/><use href="#g0" x="20" y="98"/><use href="#g0" x="28" y="98"/><use href="#g0" x="36" y="98"/><use href="#g2" x="44" y="98"/><use href="#gL" x="74" y="98"/><use href="#gL" x="98" y="98"/><use href="#gL" x="122" y="98"/><use href="#gL" x="146" y="98"/><use href="#gL" x="170" y="98"/><use href="#gL" x="194" y="98"/><use href="#gL" x="218" y="98"/><use href="#gG" x="242" y="98"/><use href="#gL" x="266" y="98"/><use href="#g1" x="293" y="98"/><use href="#g0" x="320" y="98"/><use href="#g0" x="344" y="98"/><use href="#g0" x="368" y="98"/><use href="#g0" x="392" y="98"/><use href="#g0" x="416" y="98"/><use href="#gV" x="440" y="98"/><use href="#g0" x="20" y="115"/><use href="#g0" x="28" y="115"/><use href="#g0" x="36" y="115"/><use href="#g3" x="44" y="115"/><use href="#gL" x="74" y="115"/><use href="#gL" x="98" y="115"/><use href="#gL" x="122" y="115"/><use href="#gL" x="146" y="115"/><use href="#gL" x="170" y="115"/><use href="#gL" x="194" y="115"/><use href="#gL" x="218" y="115"/><use href="#gG" x="242" y="115"/><use href="#gL" x="266" y="115"/><use href="#g0" x="293" y="115"/><use href="#g1" x="320" y="115"/><use href="#g0" x="344" y="115"/><use href="#g0" x="368" y="115"/><use href="#g0" x="392" y="115"/><use href="#g0" x="416" y="115"/><use href="#gV" x="440" y="115"/><use href="#g0" x="20" y="132"/><use href="#g0" x="28" y="132"/><use href="#g0" x="36" y="132"/><use href="#g4" x="44" y="132"/><use href="#gL" x="74" y="132"/><use href="#gL" x="98" y="132"/><use href="#gL" x="122" y="132"/><use href="#gL" x="146" y="132"/><use href="#gL" x="170" y="132"/><use href="#gL" x="194" y="132"/><use href="#gL" x="218" y="132"/><use href="#gG" x="242" y="132"/><use href="#gL" x="266" y="132"/><use href="#g1" x="293" y="132"/><use href="#g1" x="320" y="132"/><use href="#g0" x="344" y="132"/><use href="#g0" x="368" y="132"/><use href="#g0" x="392" y="132"/><use href="#g0" x="416" y="132"/><use href="#gV" x="440" y="132"/><use href="#g0" x="20" y="149"/><use href="#g0" x="28" y="149"/><use href="#g0" x="36" y="149"/><use href="#g5" x="44" y="149"/><use href="#gL" x="74" y="149"/><use href="#gL" x="98" y="149"/><use href="#gL" x="122" y="149"/><use href="#gL" x="146" y="149"/><use href="#gL" x="170" y="149"/><use href="#gL" x="194" y="149"/><use href="#gL" x="218" y="149"/><use href="#gG" x="242" y="149"/><use href="#gL" x="266" y="149"/><use href="#g0" x="293" y="149"/><use href="#g0" x="320" y="149"/><use href="#g1" x="344" y="149"/><use href="#g0" x="368" y="149"/><use href="#g0" x="392" y="149"/><use href="#g0" x="416" y="149"/><use href="#gV" x="440" y="149"/><use href="#g0" x="20" y="166"/><use href="#g0" x="28" y="166"/><use href="#g0" x="36" y="166"/><use href="#g6" x="44" y="166"/><use href="#gL" x="74" y="166"/><use href="#gL" x="98" y="166"/><use href="#gL" x="122" y="166"/><use href="#gL" x="146" y="166"/><use href="#gL" x="170" y="166"/><use href="#gL" x="194" y="166"/><use href="#gL" x="218" y="166"/><use href="#gG" x="242" y="166"/><use href="#gL" x="266" y="166"/><use href="#g1" x="293" y="166"/><use href="#g0" x="320" y="166"/><use href="#g1" x="344" y="166"/><use href="#g0" x="368" y="166"/><use href="#g0" x="392" y="166"/><use href="#g0" x="416" y="166"/><use href="#gV" x="440" y="166"/><use href="#g0" x="20" y="183"/><use href="#g0" x="28" y="183"/><use href="#g0" x="36" y="183"/><use href="#g7" x="44" y="183"/><use href="#gL" x="74" y="183"/><use href="#gL" x="98" y="183"/><use href="#gL" x="122" y="183"/><use href="#gL" x="146" y="183"/><use href="#gL" x="170" y="183"/><use href="#gL" x="194" y="183"/><use href="#gL" x="218" y="183"/><use href="#gG" x="242" y="183"/><use href="#gL" x="266" y="183"/><use href="#g0" x="293" y="183"/><use href="#g1" x="320" y="183"/><use href="#g1" x="344" y="183"/><use href="#g0" x="368" y="183"/><use href="#g0" x="392" y="183"/><use href="#g0" x="416" y="183"/><use href="#gV" x="440" y="183"/><use href="#g0" x="20" y="200"/><use href="#g0" x="28" y="200"/><use href="#g0" x="36" y="200"/><use href="#g8" x="44" y="200"/><use href="#gL" x="74" y="200"/><use href="#gL" x="98" y="200"/><use href="#gL" x="122" y="200"/><use href="#gL" x="146" y="200"/><use href="#gL" x="170" y="200"/><use href="#gL" x="194" y="200"/><use href="#gL" x="218" y="200"/><use href="#gG" x="242" y="200"/><use href="#gL" x="266" y="200"/><use href="#g1" x="293" y="200"/><use href="#g1" x="320" y="200"/><use href="#g1" x="344" y="200"/><use href="#g0" x="368" y="200"/><use href="#g0" x="392" y="200"/><use href="#g0" x="416" y="200"/><use href="#gV" x="440" y="200"/><use href="#g0" x="20" y="217"/><use href="#g0" x="28" y="217"/><use href="#g0" x="36" y="217"/><use href="#g9" x="44" y="217"/><use href="#gL" x="74" y="217"/><use href="#gL" x="98" y="217"/><use href="#gL" x="122" y="217"/><use href="#gL" x="146" y="217"/><use href="#gL" x="170" y="217"/><use href="#gL" x="194" y="217"/><use href="#gL" x="218" y="217"/><use href="#gG" x="242" y="217"/><use href="#gL" x="266" y="217"/><use href="#g0" x="293" y="217"/><use href="#g0" x="320" y="217"/><use href="#g0" x="344" y="217"/><use href="#g1" x="368" y="217"/><use href="#g0" x="392" y="217"/><use href="#g0" x="416" y="217"/><use href="#gV" x="440" y="217"/><use href="#g0" x="20" y="234"/><use href="#g0" x="28" y="234"/><use href="#g1" x="36" y="234"/><use href="#g0" x="44" y="234"/><use href="#gL" x="74" y="234"/><use href="#gL" x="98" y="234"/><use href="#gL" x="122" y="234"/><use href="#gL" x="146" y="234"/><use href="#gL" x="170" y="234"/><use href="#gL" x="194" y="234"/><use href="#gL" x="218" y="234"/><use href="#gG" x="242" y="234"/><use href="#gL" x="266" y="234"/><use href="#g1" x="293" y="234"/><use href="#g0" x="320" y="234"/><use href="#g0" x="344" y="234"/><use href="#g1" x="368" y="234"/><use href="#g0" x="392" y="234"/><use href="#g0" x="416" y="234"/><use href="#gV" x="440" y="234"/><use href="#g0" x="20" y="251"/><use href="#g0" x="28" y="251"/><use href="#g1" x="36" y="251"/><use href="#g1" x="44" y="251"/><use href="#gL" x="74" y="251"/><use href="#gL" x="98" y="251"/><use href="#gL" x="122" y="251"/><use href="#gL" x="146" y="251"/><use href="#gL" x="170" y="251"/><use href="#gL" x="194" y="251"/><use href="#gL" x="218" y="251"/><use href="#gG" x="242" y="251"/><use href="#gL" x="266" y="251"/><use href="#g0" x="293" y="251"/><use href="#g1" x="320" y="251"/><use href="#g0" x="344" y="251"/><use href="#g1" x="368" y="251"/><use href="#g0" x="392" y="251"/><use href="#g0" x="416" y="251"/><use href="#gV" x="440" y="251"/><use href="#g0" x="20" y="268"/><use href="#g0" x="28" y="268"/><use href="#g1" x="36" y="268"/><use href="#g2" x="44" y="268"/><use href="#gL" x="74" y="268"/><use href="#gL" x="98" y="268"/><use href="#gL" x="122" y="268"/><use href="#gL" x="146" y="268"/><use href="#gL" x="170" y="268"/><use href="#gL" x="194" y="268"/><use href="#gL" x="218" y="268"/><use href="#gG" x="242" y="268"/><use href="#gL" x="266" y="268"/><use href="#g1" x="293" y="268"/><use href="#g1" x="320" y="268"/><use href="#g0" x="344" y="268"/><use href="#g1" x="368" y="268"/><use href="#g0" x="392" y="268"/><use href="#g0" x="416" y="268"/><use href="#gV" x="440" y="268"/><use href="#g0" x="20" y="285"/><use href="#g0" x="28" y="285"/><use href="#g1" x="36" y="285"/><use href="#g3" x="44" y="285"/><use href="#gL" x="74" y="285"/><use href="#gL" x="98" y="285"/><use href="#gL" x="122" y="285"/><use href="#gL" x="146" y="285"/><use href="#gL" x="170" y="285"/><use href="#gL" x="194" y="285"/><use href="#gL" x="218" y="285"/><use href="#gG" x="242" y="285"/><use href="#gL" x="266" y="285"/><use href="#g0" x="293" y="285"/><use href="#g0" x="320" y="285"/><use href="#g1" x="344" y="285"/><use href="#g1" x="368" y="285"/><use href="#g0" x="392" y="285"/><use href="#g0" x="416" y="285"/><use href="#gV" x="440" y="285"/><use href="#g0" x="20" y="302"/><use href="#g0" x="28" y="302"/><use href="#g1" x="36" y="302"/><use href="#g4" x="44" y="302"/><use href="#gL" x="74" y="302"/><use href="#gL" x="98" y="302"/><use href="#gL" x="122" y="302"/><use href="#gL" x="146" y="302"/><use href="#gL" x="170" y="302"/><use href="#gL" x="194" y="302"/><use href="#gL" x="218" y="302"/><use href="#gG" x="242" y="302"/><use href="#gL" x="266" y="302"/><use href="#g1" x="293" y="302"/><use href="#g0" x="320" y="302"/><use href="#g1" x="344" y="302"/><use href="#g1" x="368" y="302"/><use href="#g0" x="392" y="302"/><use href="#g0" x="416" y="302"/><use href="#gV" x="440" y="302"/><use href="#g0" x="20" y="319"/><use href="#g0" x="28" y="319"/><use href="#g1" x="36" y="319"/><use href="#g5" x="44" y="319"/><use href="#gL" x="74" y="319"/><use href="#gL" x="98" y="319"/><use href="#gL" x="122" y="319"/><use href="#gL" x="146" y="319"/><use href="#gL" x="170" y="319"/><use href="#gL" x="194" y="319"/><use href="#gL" x="218" y="319"/><use href="#gG" x="242" y="319"/><use href="#gL" x="266" y="319"/><use href="#g0" x="293" y="319"/><use href="#g1" x="320" y="319"/><use href="#g1" x="344" y="319"/><use href="#g1" x="368" y="319"/><use href="#g0" x="392" y="319"/><use href="#g0" x="416" y="319"/><use href="#gV" x="440" y="319"/><use href="#g0" x="20" y="336"/><use href="#g0" x="28" y="336"/><use href="#g1" x="36" y="336"/><use href="#g6" x="44" y="336"/><use href="#gL" x="74" y="336"/><use href="#gL" x="98" y="336"/><use href="#gL" x="122" y="336"/><use href="#gL" x="146" y="336"/><use href="#gL" x="170" y="336"/><use href="#gL" x="194" y="336"/><use href="#gL" x="218" y="336"/><use href="#gG" x="242" y="336"/><use href="#gL" x="266" y="336"/><use href="#g1" x="293" y="336"/><use href="#g1" x="320" y="336"/><use href="#g1" x="344" y="336"/><use href="#g1" x="368" y="336"/><use href="#g0" x="392" y="336"/><use href="#g0" x="416" y="336"/><use href="#gV" x="440" y="336"/><use href="#g0" x="20" y="353"/><use href="#g0" x="28" y="353"/><use href="#g1" x="36" y="353"/><use href="#g7" x="44" y="353"/><use href="#gL" x="74" y="353"/><use href="#gL" x="98" y="353"/><use href="#gL" x="122" y="353"/><use href="#gL" x="146" y="353"/><use href="#gL" x="170" y="353"/><use href="#gL" x="194" y="353"/><use href="#gL" x="218" y="353"/><use href="#gG" x="242" y="353"/><use href="#gL" x="266" y="353"/><use href="#g0" x="293" y="353"/><use href="#g0" x="320" y="353"/><use href="#g0" x="344" y="353"/><use href="#g0" x="368" y="353"/><use href="#g1" x="392" y="353"/><use href="#g0" x="416" y="353"/><use href="#gV" x="440" y="353"/><use href="#g0" x="20" y="370"/><use href="#g0" x="28" y="370"/><use href="#g1" x="36" y="370"/><use href="#g8" x="44" y="370"/><use href="#gL" x="74" y="370"/><use href="#gL" x="98" y="370"/><use href="#gL" x="122" y="370"/><use href="#gL" x="146" y="370"/><use href="#gL" x="170" y="370"/><use href="#gL" x="194" y="370"/><use href="#gL" x="218" y="370"/><use href="#gG" x="242" y="370"/><use href="#gL" x="266" y="370"/><use href="#g1" x="293" y="370"/><use href="#g0" x="320" y="370"/><use href="#g0" x="344" y="370"/><use href="#g0" x="368" y="370"/><use href="#g1" x="392" y="370"/><use href="#g0" x="416" y="370"/><use href="#gV" x="440" y="370"/><use href="#g0" x="20" y="387"/><use href="#g0" x="28" y="387"/><use href="#g1" x="36" y="387"/><use href="#g9" x="44" y="387"/><use href="#gL" x="74" y="387"/><use href="#gL" x="98" y="387"/><use href="#gL" x="122" y="387"/><use href="#gL" x="146" y="387"/><use href="#gL" x="170" y="387"/><use href="#gL" x="194" y="387"/><use href="#gL" x="218" y="387"/><use href="#gG" x="242" y="387"/><use href="#gL" x="266" y="387"/><use href="#g0" x="293" y="387"/><use href="#g1" x="320" y="387"/><use href="#g0" x="344" y="387"/><use href="#g0" x="368" y="387"/><use href="#g1" x="392" y="387"/><use href="#g0" x="416" y="387"/><use href="#gV" x="440" y="387"/><use href="#g0" x="20" y="404"/><use href="#g0" x="28" y="404"/><use href="#g2" x="36" y="404"/><use href="#g0" x="44" y="404"/><use href="#gL" x="74" y="404"/><use href="#gL" x="98" y="404"/><use href="#gL" x="122" y="404"/><use href="#gL" x="146" y="404"/><use href="#gL" x="170" y="404"/><use href="#gL" x="194" y="404"/><use href="#gL" x="218" y="404"/><use href="#gG" x="242" y="404"/><use href="#gL" x="266" y="404"/><use href="#g1" x="293" y="404"/><use href="#g1" x="320" y="404"/><use href="#g0" x="344" y="404"/><use href="#g0" x="368" y="404"/><use href="#g1" x="392" y="404"/><use href="#g0" x="416" y="404"/><use href="#gV" x="440" y="404"/><use href="#g0" x="20" y="421"/><use href="#g0" x="28" y="421"/><use href="#g2" x="36" y="421"/><use href="#g1" x="44" y="421"/><use href="#gL" x="74" y="421"/><use href="#gL" x="98" y="421"/><use href="#gL" x="122" y="421"/><use href="#gL" x="146" y="421"/><use href="#gL" x="170" y="421"/><use href="#gL" x="194" y="421"/><use href="#gL" x="218" y="421"/><use href="#gG" x="242" y="421"/><use href="#gL" x="266" y="421"/><use href="#g0" x="293" y="421"/><use href="#g0" x="320" y="421"/><use href="#g1" x="344" y="421"/><use href="#g0" x="368" y="421"/><use href="#g1" x="392" y="421"/><use href="#g0" x="416" y="421"/><use href="#gV" x="440" y="421"/><use href="#g0" x="20" y="438"/><use href="#g0" x="28" y="438"/><use href="#g2" x="36" y="438"/><use href="#g2" x="44" y="438"/><use href="#gL" x="74" y="438"/><use href="#gL" x="98" y="438"/><use href="#gL" x="122" y="438"/><use href="#gL" x="146" y="438"/><use href="#gL" x="170" y="438"/><use href="#gL" x="194" y="438"/><use href="#gL" x="218" y="438"/><use href="#gG" x="242" y="438"/><use href="#gL" x="266" y="438"/><use href="#g1" x="293" y="438"/><use href="#g0" x="320" y="438"/><use href="#g1" x="344" y="438"/><use href="#g0" x="368" y="438"/><use href="#g1" x="392" y="438"/><use href="#g0" x="416" y="438"/><use href="#gV" x="440" y="438"/><use href="#g0" x="20" y="455"/><use href="#g0" x="28" y="455"/><use href="#g2" x="36" y="455"/><use href="#g3" x="44" y="455"/><use href="#gL" x="74" y="455"/><use href="#gL" x="98" y="455"/><use href="#gL" x="122" y="455"/><use href="#gL" x="146" y="455"/><use href="#gL" x="170" y="455"/><use href="#gL" x="194" y="455"/><use href="#gL" x="218" y="455"/><use href="#gG" x="242" y="455"/><use href="#gL" x="266" y="455"/><use href="#g0" x="293" y="455"/><use href="#g1" x="320" y="455"/><use href="#g1" x="344" y="455"/><use href="#g0" x="368" y="455"/><use href="#g1" x="392" y="455"/><use href="#g0" x="416" y="455"/><use href="#gV" x="440" y="455"/><use href="#g0" x="20" y="472"/><use href="#g0" x="28" y="472"/><use href="#g2" x="36" y="472"/><use href="#g4" x="44" y="472"/><use href="#gL" x="74" y="472"/><use href="#gL" x="98" y="472"/><use href="#gL" x="122" y="472"/><use href="#gL" x="146" y="472"/><use href="#gL" x="170" y="472"/><use href="#gL" x="194" y="472"/><use href="#gL" x="218" y="472"/><use href="#gG" x="242" y="472"/><use href="#gL" x="266" y="472"/><use href="#g1" x="293" y="472"/><use href="#g1" x="320" y="472"/><use href="#g1" x="344" y="472"/><use href="#g0" x="368" y="472"/><use href="#g1" x="392" y="472"/><use href="#g0" x="416" y="472"/><use href="#gV" x="440" y="472"/><use href="#g0" x="20" y="489"/><use href="#g0" x="28" y="489"/><use href="#g2" x="36" y="489"/><use href="#g5" x="44" y="489"/><use href="#gL" x="74" y="489"/><use href="#gL" x="98" y="489"/><use href="#gL" x="122" y="489"/><use href="#gL" x="146" y="489"/><use href="#gL" x="170" y="489"/><use href="#gL" x="194" y="489"/><use href="#gL" x="218" y="489"/><use href="#gG" x="242" y="489"/><use href="#gL" x="266" y="489"/><use href="#g0" x="293" y="489"/><use href="#g0" x="320" y="489"/><use href="#g0" x="344" y="489"/><use href="#g1" x="368" y="489"/><use href="#g1" x="392" y="489"/><use href="#g0" x="416" y="489"/><use href="#gV" x="440" y="489"/><use href="#g0" x="20" y="506"/><use href="#g0" x="28" y="506"/><use href="#g2" x="36" y="506"/><use href="#g6" x="44" y="506"/><use href="#gL" x="74" y="506"/><use href="#gL" x="98" y="506"/><use href="#gL" x="122" y="506"/><use href="#gL" x="146" y="506"/><use href="#gL" x="170" y="506"/><use href="#gL" x="194" y="506"/><use href="#gL" x="218" y="506"/><use href="#gG" x="242" y="506"/><use href="#gL" x="266" y="506"/><use href="#g1" x="293" y="506"/><use href="#g0" x="320" y="506"/><use href="#g0" x="344" y="506"/><use href="#g1" x="368" y="506"/><use href="#g1" x="392" y="506"/><use href="#g0" x="416" y="506"/><use href="#gV" x="440" y="506"/><use href="#g0" x="20" y="523"/><use href="#g0" x="28" y="523"/><use href="#g2" x="36" y="523"/><use href="#g7" x="44" y="523"/><use href="#gL" x="74" y="523"/><use href="#gL" x="98" y="523"/><use href="#gL" x="122" y="523"/><use href="#gL" x="146" y="523"/><use href="#gL" x="170" y="523"/><use href="#gL" x="194" y="523"/><use href="#gL" x="218" y="523"/><use href="#gG" x="242" y="523"/><use href="#gL" x="266" y="523"/><use href="#g0" x="293" y="523"/><use href="#g1" x="320" y="523"/><use href="#g0" x="344" y="523"/><use href="#g1" x="368" y="523"/><use href="#g1" x="392" y="523"/><use href="#g0" x="416" y="523"/><use href="#gV" x="440" y="523"/><use href="#g0" x="20" y="540"/><use href="#g0" x="28" y="540"/><use href="#g2" x="36" y="540"/><use href="#g8" x="44" y="540"/><use href="#gL" x="74" y="540"/><use href="#gL" x="98" y="540"/><use href="#gL" x="122" y="540"/><use href="#gL" x="146" y="540"/><use href="#gL" x="170" y="540"/><use href="#gL" x="194" y="540"/><use href="#gL" x="218" y="540"/><use href="#gG" x="242" y="540"/><use href="#gL" x="266" y="540"/><use href="#g1" x="293" y="540"/><use href="#g1" x="320" y="540"/><use href="#g0" x="344" y="540"/><use href="#g1" x="368" y="540"/><use href="#g1" x="392" y="540"/><use href="#g0" x="416" y="540"/><use href="#gV" x="440" y="540"/><use href="#g0" x="20" y="557"/><use href="#g0" x="28" y="557"/><use href="#g2" x="36" y="557"/><use href="#g9" x="44" y="557"/><use href="#gL" x="74" y="557"/><use href="#gL" x="98" y="557"/><use href="#gL" x="122" y="557"/><use href="#gL" x="146" y="557"/><use href="#gL" x="170" y="557"/><use href="#gL" x="194" y="557"/><use href="#gL" x="218" y="557"/><use href="#gG" x="242" y="557"/><use href="#gL" x="266" y="557"/><use href="#g0" x="293" y="557"/><use href="#g0" x="320" y="557"/><use href="#g1" x="344" y="557"/><use href="#g1" x="368" y="557"/><use href="#g1" x="392" y="557"/><use href="#g0" x="416" y="557"/><use href="#gV" x="440" y="557"/><use href="#g0" x="20" y="574"/><use href="#g0" x="28" y="574"/><use href="#g3" x="36" y="574"/><use href="#g0" x="44" y="574"/><use href="#gL" x="74" y="574"/><use href="#gL" x="98" y="574"/><use href="#gL" x="122" y="574"/><use href="#gL" x="146" y="574"/><use href="#gL" x="170" y="574"/><use href="#gL" x="194" y="574"/><use href="#gL" x="218" y="574"/><use href="#gG" x="242" y="574"/><use href="#gL" x="266" y="574"/><use href="#g1" x="293" y="574"/><use href="#g0" x="320" y="574"/><use href="#g1" x="344" y="574"/><use href="#g1" x="368" y="574"/><use href="#g1" x="392" y="574"/><use href="#g0" x="416" y="574"/><use href="#gV" x="440" y="574"/><use href="#g0" x="20" y="591"/><use href="#g0" x="28" y="591"/><use href="#g3" x="36" y="591"/><use href="#g1" x="44" y="591"/><use href="#gL" x="74" y="591"/><use href="#gL" x="98" y="591"/><use href="#gL" x="122" y="591"/><use href="#gL" x="146" y="591"/><use href="#gL" x="170" y="591"/><use href="#gL" x="194" y="591"/><use href="#gL" x="218" y="591"/><use href="#gG" x="242" y="591"/><use href="#gL" x="266" y="591"/><use href="#g0" x="293" y="591"/><use href="#g1" x="320" y="591"/><use href="#g1" x="344" y="591"/><use href="#g1" x="368" y="591"/><use href="#g1" x="392" y="591"/><use href="#g0" x="416" y="591"/><use href="#gV" x="440" y="591"/><use href="#g0" x="20" y="608"/><use href="#g0" x="28" y="608"/><use href="#g3" x="36" y="608"/><use href="#g2" x="44" y="608"/><use href="#gL" x="74" y="608"/><use href="#gL" x="98" y="608"/><use href="#gL" x="122" y="608"/><use href="#gL" x="146" y="608"/><use href="#gL" x="170" y="608"/><use href="#gL" x="194" y="608"/><use href="#gL" x="218" y="608"/><use href="#gG" x="242" y="608"/><use href="#gL" x="266" y="608"/><use href="#g1" x="293" y="608"/><use href="#g1" x="320" y="608"/><use href="#g1" x="344" y="608"/><use href="#g1" x="368" y="608"/><use href="#g1" x="392" y="608"/><use href="#g0" x="416" y="608"/><use href="#gV" x="440" y="608"/><use href="#g0" x="20" y="625"/><use href="#g0" x="28" y="625"/><use href="#g3" x="36" y="625"/><use href="#g3" x="44" y="625"/><use href="#gZ" x="74" y="625"/><use href="#gZ" x="98" y="625"/><use href="#gZ" x="122" y="625"/><use href="#gZ" x="146" y="625"/><use href="#gZ" x="170" y="625"/><use href="#gZ" x="194" y="625"/><use href="#gZ" x="218" y="625"/><use href="#gG" x="242" y="625"/><use href="#gZ" x="266" y="625"/><use href="#gX" x="293" y="625"/><use href="#gX" x="320" y="625"/><use href="#gX" x="344" y="625"/><use href="#gX" x="368" y="625"/><use href="#gX" x="392" y="625"/><use href="#g1" x="416" y="625"/><use href="#gV" x="440" y="625"/><use href="#gL" x="723" y="476"/><use href="#gV" x="897" y="476"/><use href="#gL" x="723" y="498"/><use href="#g0" x="897" y="498"/><use href="#gL" x="723" y="520"/><use href="#g0" x="897" y="520"/><use href="#gL" x="723" y="542"/><use href="#g0" x="897" y="542"/><use href="#gL" x="723" y="564"/><use href="#g0" x="897" y="564"/><use href="#gL" x="723" y="586"/><use href="#g0" x="897" y="586"/><use href="#gL" x="723" y="608"/><use href="#g0" x="897" y="608"/><use href="#gG" x="723" y="630"/><use href="#gL" x="897" y="630"/><use href="#b1" x="800" y="478"/><use href="#b1" x="852" y="478"/><use href="#b6" x="860" y="478"/><use href="#b2" x="800" y="500"/><use href="#b1" x="852" y="500"/><use href="#b5" x="860" y="500"/><use href="#b3" x="800" y="522"/><use href="#b1" x="852" y="522"/><use href="#b4" x="860" y="522"/><use href="#b4" x="800" y="544"/><use href="#b1" x="852" y="544"/><use href="#b3" x="860" y="544"/><use href="#b5" x="800" y="566"/><use href="#b1" x="852" y="566"/><use href="#b2" x="860" y="566"/><use href="#b6" x="800" y="588"/><use href="#b1" x="852" y="588"/><use href="#b1" x="860" y="588"/><use href="#b7" x="800" y="610"/><use href="#b1" x="852" y="610"/><use href="#b0" x="860" y="610"/><use href="#b8" x="800" y="632"/><use href="#b9" x="858" y="632"/></g></svg></div></body></html>
